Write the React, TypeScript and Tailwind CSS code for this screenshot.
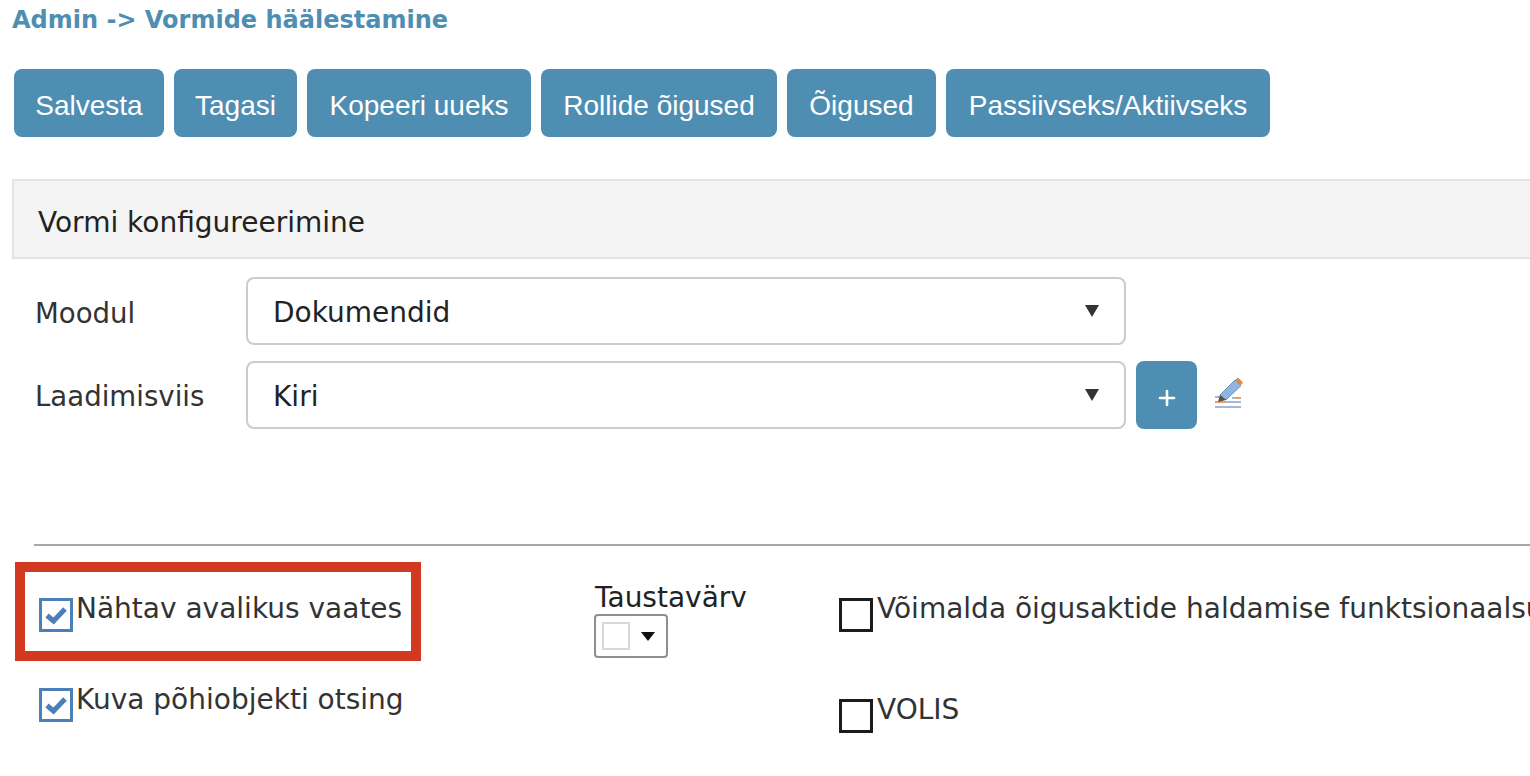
import { Plus } from "lucide-react";

const buttons = [
    { label: "Salvesta", width: "w-[150px]" },
    { label: "Tagasi", width: "w-[123px]" },
    { label: "Kopeeri uueks", width: "w-[224px]" },
    { label: "Rollide õigused", width: "w-[236px]" },
    { label: "Õigused", width: "w-[149px]" },
    { label: "Passiivseks/Aktiivseks", width: "w-[324px]" },
];

function Caret() {
    return (
        <svg width="16" height="14" viewBox="0 0 16 14" className="absolute right-[24px] top-[25px]">
            <path d="M1 1h14L8 13z" fill="#333" />
        </svg>
    );
}

function SelectBox({ value }: { value: string }) {
    return (
        <div className="relative flex h-[68px] w-[880px] shrink-0 items-center rounded-[8px] border-2 border-[#cccccc] bg-white pl-[25px] pt-[4px] text-[28px] text-[#222222]">
            {value}
            <Caret />
        </div>
    );
}

function Check({ checked }: { checked?: boolean }) {
    if (!checked) {
        return <div className="h-[34px] w-[34px] shrink-0 border-[3px] border-[#1c1c1c] bg-white" />;
    }
    return (
        <div className="flex h-[34px] w-[34px] shrink-0 items-center justify-center border-[3px] border-[#4a7fb8] bg-white">
            <svg width="24" height="20" viewBox="0 0 24 20">
                <path d="M3 10.5l6.5 5.5L21 4" fill="none" stroke="#4a7fb8" strokeWidth="5" />
            </svg>
        </div>
    );
}

function EditIcon() {
    return (
        <svg width="30" height="34" viewBox="0 0 30 34" className="ml-[17px] mt-[-2px]">
            <path d="M1 20h9M18 21h9M1 25h26M1 30h26" stroke="#a9b7d6" strokeWidth="2.2" />
            <path d="M1 25h11M21 21h6" stroke="#e8a06a" strokeWidth="2.2" />
            <path d="M6 18L21 3l6 5.5L12 23z" fill="#8fb6e0" stroke="#6f8fb8" strokeWidth="1" />
            <path d="M21 3l3-2.5 5 5-2.5 3z" fill="#dd8a4c" />
            <path d="M6 18l-2 7 8-2z" fill="#5a5040" />
        </svg>
    );
}

export default function App() {
    return (
        <div className="h-[776px] w-[1530px] overflow-hidden bg-white font-['DejaVu_Sans',sans-serif] text-[#222222]">
            <h1 className="ml-[12px] pt-[4px] text-[24px] font-bold leading-[32px] text-[#4f8eb3]">
                Admin -&gt; Vormide häälestamine
            </h1>

            {/* nupud */}
            <div className="ml-[14px] mt-[33px] flex gap-[10px]">
                {buttons.map((b) => (
                    <div
                        key={b.label}
                        className={`flex h-[68px] items-center justify-center rounded-[8px] bg-[#4f8eb3] pt-[5px] font-['Liberation_Sans',sans-serif] text-[28px] text-white ${b.width}`}
                    >
                        {b.label}
                    </div>
                ))}
            </div>

            {/* paneel */}
            <div className="ml-[12px] mt-[42px] flex h-[80px] w-[1530px] items-center border-2 border-[#e3e3e3] bg-[#f4f4f4] pl-[24px] pt-[7px] text-[28px]">
                Vormi konfigureerimine
            </div>

            <div className="ml-[35px] mt-[18px] flex items-center">
                <div className="w-[211px] shrink-0 pt-[5px] text-[27.6px] text-[#333333]">Moodul</div>
                <SelectBox value="Dokumendid" />
            </div>
            <div className="ml-[35px] mt-[16px] flex items-center">
                <div className="w-[211px] shrink-0 pt-[4px] text-[27.6px] text-[#333333]">Laadimisviis</div>
                <SelectBox value="Kiri" />
                <div className="ml-[10px] flex h-[68px] w-[61px] items-center justify-center rounded-[8px] bg-[#4f8eb3] pt-[6px] text-white">
                    <Plus size={24} strokeWidth={2.6} />
                </div>
                <EditIcon />
            </div>

            <div className="ml-[34px] mt-[115px] h-[2px] bg-[#a8a8a8]" />

            {/* valikud */}
            <div className="mt-[16px] flex">
                <div className="ml-[15px] w-[579px] shrink-0">
                    <div className="flex h-[99px] w-[406px] border-[10px] border-[#d13a20] pl-[14px] pt-[26px]">
                        <Check checked />
                        <span className="ml-[3px] mt-[-9px] whitespace-nowrap text-[28px] leading-[40px] text-[#333333]">
                            Nähtav avalikus vaates
                        </span>
                    </div>
                    <div className="ml-[24px] mt-[27px] flex">
                        <Check checked />
                        <span className="ml-[3px] mt-[-8px] whitespace-nowrap text-[28px] leading-[40px] text-[#333333]">
                            Kuva põhiobjekti otsing
                        </span>
                    </div>
                </div>

                <div className="w-[245px] shrink-0 pt-[20px]">
                    <div className="ml-[1px] text-[28px] leading-[32px] text-[#222222]">Taustavärv</div>
                    <div className="flex h-[44px] w-[74px] items-center rounded-[4px] border-2 border-[#8f8f8f] bg-white pl-[6px]">
                        <div className="h-[28px] w-[28px] border-2 border-[#d8d8d8] bg-white" />
                        <svg width="16" height="9" viewBox="0 0 16 9" className="ml-[10px]">
                            <path d="M1 0h14L8 9z" fill="#111" />
                        </svg>
                    </div>
                </div>

                <div className="shrink-0 pt-[36px]">
                    <div className="flex whitespace-nowrap">
                        <Check />
                        <span className="ml-[4px] mt-[-9px] text-[28px] leading-[40px] text-[#333333]">
                            Võimalda õigusaktide haldamise funktsionaalsus
                        </span>
                    </div>
                    <div className="mt-[67px] flex">
                        <Check />
                        <span className="ml-[4px] mt-[-9px] text-[28px] leading-[40px] text-[#333333]">VOLIS</span>
                    </div>
                </div>
            </div>
        </div>
    );
}
